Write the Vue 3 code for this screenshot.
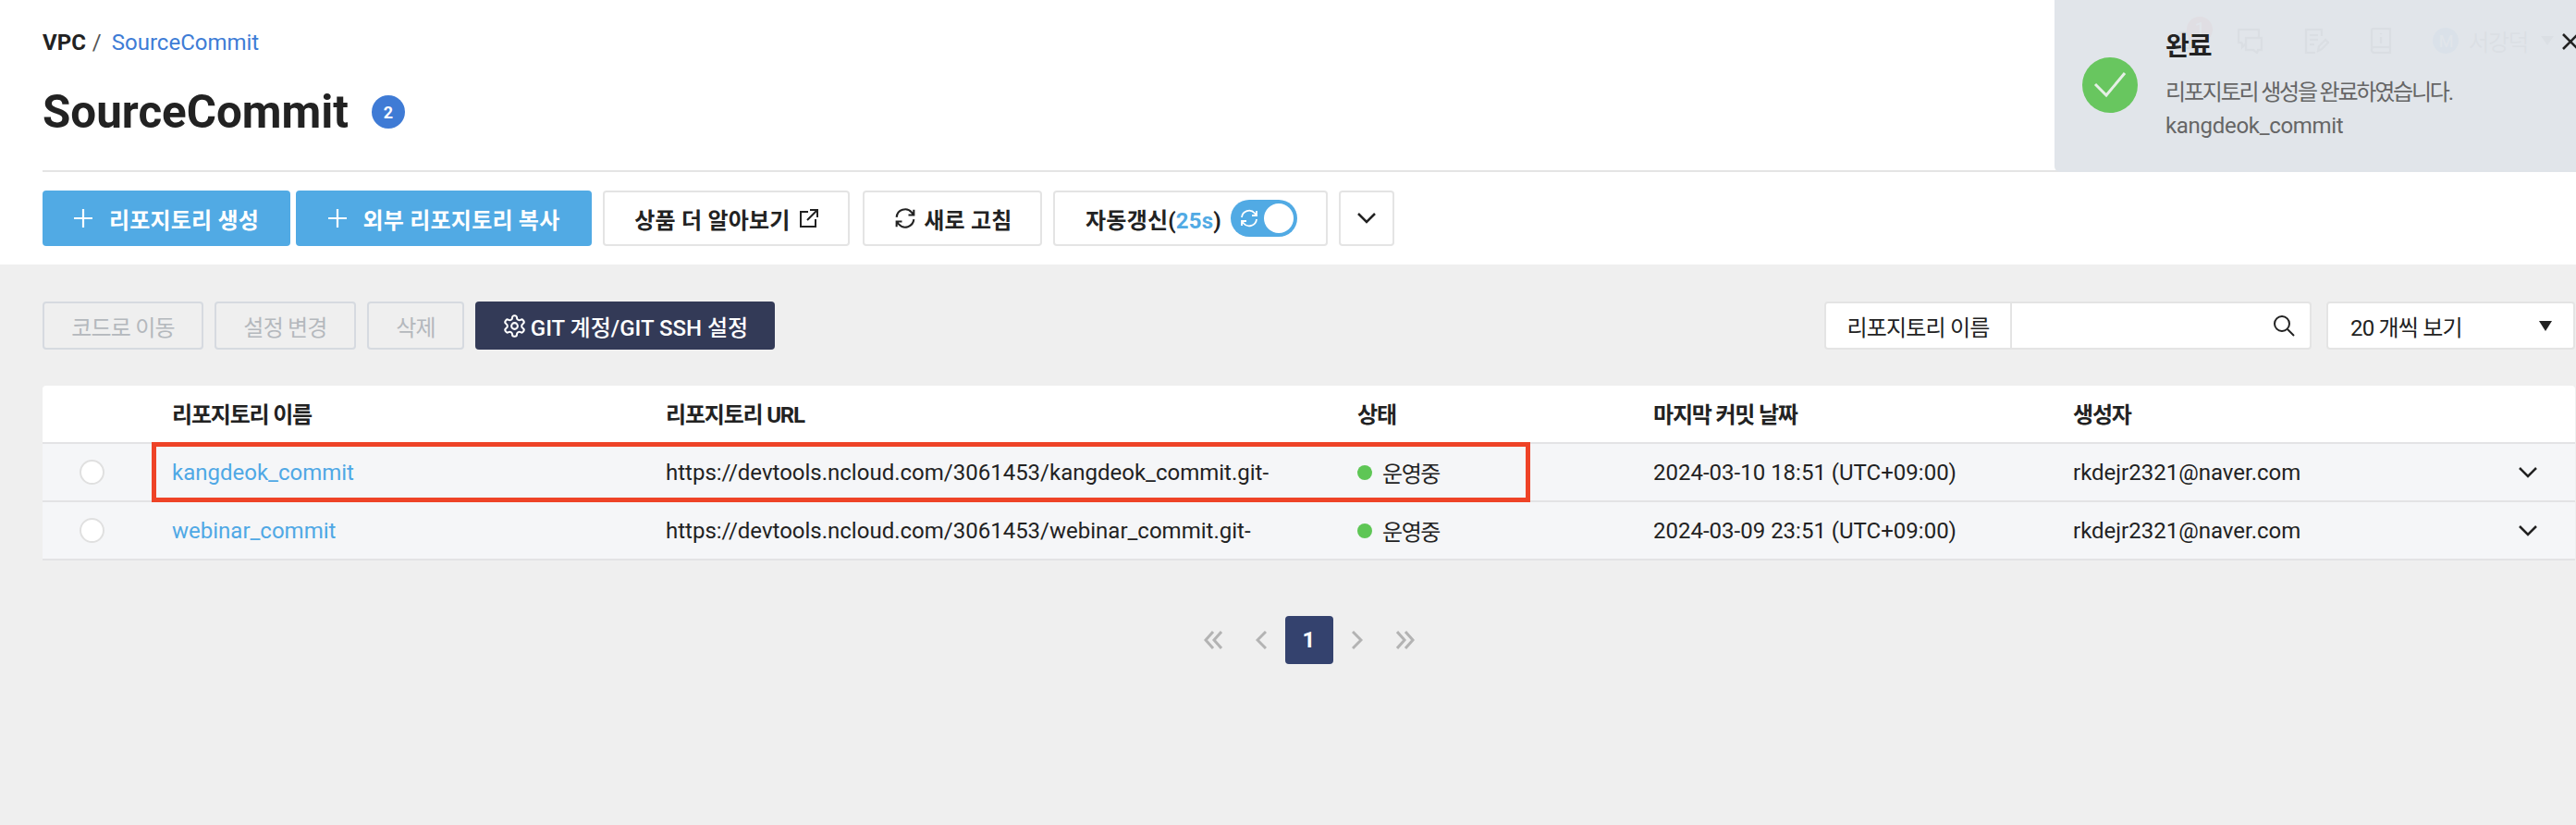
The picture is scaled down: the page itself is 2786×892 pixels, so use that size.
<script setup>
const columns = ['리포지토리 이름', '리포지토리 URL', '상태', '마지막 커밋 날짜', '생성자']
const rows = [
  { name: 'kangdeok_commit', url: 'https://devtools.ncloud.com/3061453/kangdeok_commit.git-', date: '2024-03-10 18:51 (UTC+09:00)' },
  { name: 'webinar_commit', url: 'https://devtools.ncloud.com/3061453/webinar_commit.git-', date: '2024-03-09 23:51 (UTC+09:00)' },
]
</script>

<template>
  <div class="page">
    <header class="head">
      <div class="top">
        <nav class="crumbs">
          <b>VPC</b><span class="slash">/</span><a class="crumb-link">SourceCommit</a>
        </nav>
        <div class="menu">
          <span class="bell">
            <svg width="28" height="28" viewBox="0 0 24 24" fill="none" stroke="currentColor" stroke-width="2"><path d="M6 17V10a6 6 0 0 1 12 0v7l2 2H4zM10 22h4" /></svg>
            <i class="bell-count">1</i>
          </span>
          <svg width="29" height="28" viewBox="0 0 29 28" fill="none" stroke="currentColor" stroke-width="2.4"><path d="M6 16H2V2h22v8M10 11h17v13h-4l-1 3-4-3h-8zM6 16v5l4-4" /></svg>
          <svg width="27" height="28" viewBox="0 0 27 28" fill="none" stroke="currentColor" stroke-width="2.4"><path d="M19 9V2H2v25h10M6 8h9M6 13h9M6 18h5M15 25l1-5 7-7 3 3-7 7z" /></svg>
          <svg width="24" height="28" viewBox="0 0 24 28" fill="none" stroke="currentColor" stroke-width="2.4"><path d="M2 23V3a2 2 0 0 1 2-2h18v26H5a3 3 0 0 1-3-4 3 3 0 0 1 3-2h17M12 6v1M12 10v7" /></svg>
          <span class="user">
            <i class="avatar">M</i>
            <span class="user-name">서강덕</span>
            <i class="user-caret"></i>
          </span>
        </div>
      </div>

      <div class="title-row">
        <h1>SourceCommit</h1>
        <span class="count">2</span>
      </div>

      <div class="actions">
        <button class="btn primary first">
          <svg width="20" height="20" viewBox="0 0 20 20" stroke="currentColor" stroke-width="2.2"><path d="M10 0v20M0 10h20" /></svg>
          <span>리포지토리 생성</span>
        </button>
        <button class="btn primary second">
          <svg width="20" height="20" viewBox="0 0 20 20" stroke="currentColor" stroke-width="2.2"><path d="M10 0v20M0 10h20" /></svg>
          <span>외부 리포지토리 복사</span>
        </button>
        <button class="btn outline learn">
          <span>상품 더 알아보기</span>
          <svg width="21" height="21" viewBox="0 0 21 21" fill="none" stroke="currentColor" stroke-width="2"><path d="M10 3H2v16h16v-8M12 1h8v8M20 1 9 12" /></svg>
        </button>
        <button class="btn outline refresh">
          <svg width="28" height="28" viewBox="0 0 24 24" fill="none" stroke="currentColor" stroke-width="1.800"><path d="M4 11a8 8 0 0 1 14-4.500L20 9M20 4v5h-5M20 13a8 8 0 0 1-14 4.500L4 15M4 20v-5h5" /></svg>
          <span>새로 고침</span>
        </button>
        <div class="btn outline auto">
          <span>자동갱신(<em>25s</em>)</span>
          <span class="toggle">
            <svg width="24" height="24" viewBox="0 0 24 24" fill="none" stroke="#fff" stroke-width="1.800"><path d="M4 11a8 8 0 0 1 14-4.500L20 9M20 4v5h-5M20 13a8 8 0 0 1-14 4.500L4 15M4 20v-5h5" /></svg>
            <i class="knob"></i>
          </span>
        </div>
        <button class="btn outline more">
          <svg width="22" height="14" viewBox="0 0 22 14" fill="none" stroke="#222" stroke-width="2.500"><path d="m2 2 9 9 9-9" /></svg>
        </button>
      </div>
    </header>

    <main class="content">
      <div class="toolbar">
        <div class="tools">
          <button class="tool off w1">코드로 이동</button>
          <button class="tool off w2">설정 변경</button>
          <button class="tool off w3">삭제</button>
          <button class="tool dark">
            <svg width="27" height="27" viewBox="0 0 24 24" fill="none" stroke="#fff" stroke-width="1.800"><path d="M12.220 2h-.440a2 2 0 0 0-2 2v.180a2 2 0 0 1-1 1.730l-.430.250a2 2 0 0 1-2 0l-.150-.080a2 2 0 0 0-2.730.730l-.220.380a2 2 0 0 0 .730 2.730l.150.100a2 2 0 0 1 1 1.720v.510a2 2 0 0 1-1 1.740l-.150.090a2 2 0 0 0-.730 2.730l.220.380a2 2 0 0 0 2.730.730l.150-.080a2 2 0 0 1 2 0l.430.250a2 2 0 0 1 1 1.730V20a2 2 0 0 0 2 2h.440a2 2 0 0 0 2-2v-.180a2 2 0 0 1 1-1.730l.430-.250a2 2 0 0 1 2 0l.150.080a2 2 0 0 0 2.730-.730l.220-.390a2 2 0 0 0-.730-2.730l-.150-.080a2 2 0 0 1-1-1.740v-.500a2 2 0 0 1 1-1.740l.150-.090a2 2 0 0 0 .730-2.730l-.220-.380a2 2 0 0 0-2.730-.730l-.150.080a2 2 0 0 1-2 0l-.430-.250a2 2 0 0 1-1-1.730V4a2 2 0 0 0-2-2z" /><circle cx="12" cy="12" r="3" /></svg>
            <span>GIT 계정/GIT SSH 설정</span>
          </button>
        </div>
        <div class="filters">
          <div class="search">
            <span class="search-label">리포지토리 이름</span>
            <span class="search-field">
              <svg width="24" height="24" viewBox="0 0 24 24" fill="none" stroke="#222" stroke-width="2"><circle cx="10" cy="10" r="8" /><path d="m16 16 7 7" /></svg>
            </span>
          </div>
          <div class="select">
            <span class="select-text">20 개씩 보기</span>
            <i class="select-caret"></i>
          </div>
        </div>
      </div>

      <section class="table">
        <div class="row header">
          <span></span>
          <span v-for="c in columns" :key="c">{{ c }}</span>
          <span></span>
        </div>
        <div v-for="r in rows" :key="r.name" class="row body">
          <span class="radio-cell"><i class="radio"></i></span>
          <a class="repo">{{ r.name }}</a>
          <span>{{ r.url }}</span>
          <span class="status"><i class="dot"></i><span class="status-text">운영중</span></span>
          <span>{{ r.date }}</span>
          <span>rkdejr2321@naver.com</span>
          <span class="expand">
            <svg width="22" height="14" viewBox="0 0 22 14" fill="none" stroke="#222" stroke-width="2.500"><path d="m2 2 9 9 9-9" /></svg>
          </span>
        </div>
        <div class="highlight"></div>
      </section>

      <nav class="pager">
        <svg class="edge-left" width="20" height="20" viewBox="0 0 20 20" fill="none" stroke="#b3b3b3" stroke-width="3"><path d="M10 1 2 10l8 9M19 1l-8 9 8 9" /></svg>
        <svg width="12" height="20" viewBox="0 0 12 20" fill="none" stroke="#b3b3b3" stroke-width="3"><path d="M11 1 2 10l9 9" /></svg>
        <span class="current">1</span>
        <svg width="12" height="20" viewBox="0 0 12 20" fill="none" stroke="#b3b3b3" stroke-width="3"><path d="m1 1 9 9-9 9" /></svg>
        <svg class="edge-right" width="20" height="20" viewBox="0 0 20 20" fill="none" stroke="#b3b3b3" stroke-width="3"><path d="m1 1 8 9-8 9M10 1l8 9-8 9" /></svg>
      </nav>
    </main>

    <aside class="toast">
      <span class="ok">
        <svg width="36" height="30" viewBox="0 0 36 30" fill="none" stroke="#e6efe6" stroke-width="3"><path d="m2 14 12 12L34 2" /></svg>
      </span>
      <div class="toast-text">
        <strong>완료</strong>
        <p class="toast-msg">리포지토리 생성을 완료하였습니다.</p>
        <p class="toast-name">kangdeok_commit</p>
      </div>
      <svg class="close" width="18" height="18" viewBox="0 0 18 18" fill="none" stroke="#222" stroke-width="2.600"><path d="m1 1 16 16M17 1 1 17" /></svg>
    </aside>
  </div>
</template>

<style>
html, body { margin: 0; overflow: hidden; }
</style>

<style scoped>
.page {
  position: relative;
  width: 2786px;
  height: 892px;
  overflow: hidden;
  background: #efefef;
  color: #222;
  font-family: Roboto, "Noto Sans CJK KR", sans-serif;
  font-size: 24px;
}
button { font: inherit; padding: 0; margin: 0; }
i, em { font-style: normal; }

.head { background: #fff; height: 286px; box-sizing: border-box; padding-left: 46px; }
.top { display: flex; align-items: center; justify-content: space-between; height: 78px; padding-top: 14px; box-sizing: border-box; }
.crumbs { display: flex; align-items: center; line-height: 32px; }
.crumbs b { font-weight: 700; }
.slash { margin: 0 11px 0 7px; color: #555; }
.crumb-link { color: #3e7cd6; }

.menu { display: flex; align-items: center; gap: 44px; padding-right: 24px; color: #555; height: 56px; margin-top: -4px; }
.bell { position: relative; display: flex; width: 28px; }
.bell-count {
  position: absolute; left: 18px; top: -12px; width: 28px; height: 28px; border-radius: 50%;
  background: #d4524a; color: #fff; display: flex; align-items: center; justify-content: center; font-size: 20px;
}
.user { display: flex; align-items: center; gap: 10px; font-size: 25px; color: #666; }
.user-name { letter-spacing: -1.5px; }
.avatar {
  width: 28px; height: 28px; border-radius: 50%; background: #4b9de0; color: #fff;
  display: flex; align-items: center; justify-content: center; font-size: 18px;
}
.user-caret { width: 0; height: 0; border: 7px solid transparent; border-top: 10px solid #666; border-bottom: 0; margin-left: 4px; }

.title-row {
  display: flex; align-items: center; gap: 25px; height: 106px; box-sizing: content-box;
  border-bottom: 2px solid #e4e4e4; padding-bottom: 0;
}
h1 { margin: -20px 0 0; font-size: 49.3px; font-weight: 700; line-height: 56px; }
.count {
  width: 36px; height: 36px; margin-top: -20px; border-radius: 50%; background: #3f7bd5; color: #fff;
  display: flex; align-items: center; justify-content: center; font-size: 18px; font-weight: 700;
}

.actions { display: flex; margin-top: 20px; }
.btn {
  height: 60px; box-sizing: border-box; border-radius: 4px; display: flex; align-items: center; justify-content: center;
  font-size: 24px; font-weight: 700; letter-spacing: 0.2px;
}
.primary { background: #51aae4; color: #fff; border: 0; gap: 18px; }
.first { width: 268px; }
.second { width: 320px; margin-left: 6px; }
.outline { background: #fff; border: 2px solid #e4e4e4; color: #222; }
.learn { width: 267px; margin-left: 12px; gap: 9px; }
.refresh { width: 194px; margin-left: 14px; gap: 6px; }
.auto { width: 297px; margin-left: 12px; gap: 10px; padding-left: 2px; }
.auto em { color: #51aae4; font-weight: 700; }
.toggle {
  width: 72px; height: 40px; border-radius: 20px; background: #51aae4; display: flex; align-items: center;
  justify-content: space-between; padding: 0 4px 0 8px; box-sizing: border-box;
}
.knob { width: 32px; height: 32px; border-radius: 50%; background: #fff; }
.more { width: 60px; margin-left: 12px; }

.content { padding: 40px 1px 0 46px; }
.toolbar { display: flex; justify-content: space-between; height: 52px; }
.tools { display: flex; gap: 12px; }
.tool { height: 52px; box-sizing: border-box; border-radius: 4px; font-size: 24px; }
.off { background: transparent; border: 2px solid #d6dae0; color: #b4b8bd; letter-spacing: -0.8px; }
.w1 { width: 174px; } .w2 { width: 153px; } .w3 { width: 105px; }
.dark { width: 324px; background: #333a57; color: #fff; border: 0; display: flex; align-items: center; justify-content: center; gap: 4px; font-weight: 500; }
.filters { display: flex; gap: 16px; }
.search { display: flex; width: 527px; height: 52px; box-sizing: border-box; background: #fff; border: 2px solid #e4e4e4; border-radius: 4px; }
.search-label { width: 201px; flex: none; box-sizing: border-box; border-right: 2px solid #e4e4e4; display: flex; align-items: center; justify-content: center; letter-spacing: -0.8px; }
.search-field { flex: 1; display: flex; align-items: center; justify-content: flex-end; padding-right: 16px; }
.select {
  width: 269px; height: 52px; box-sizing: border-box; background: #fff; border: 2px solid #e4e4e4; border-radius: 4px;
  display: flex; align-items: center; justify-content: space-between; padding: 0 23px 0 24px;
}
.select-text { letter-spacing: -0.8px; }
.select-caret { width: 0; height: 0; border: 7.5px solid transparent; border-top: 11px solid #222; border-bottom: 0; }

.table { position: relative; margin-top: 39px; }
.row {
  display: grid;
  grid-template-columns: 140px 534px 748px 320px 454px 1fr 70px;
  align-items: center;
  box-sizing: border-box;
  border-bottom: 2px solid #e3e3e5;
  height: 63px;
}
.header { background: #fff; font-weight: 700; border-radius: 4px 4px 0 0; letter-spacing: -1.2px; padding-bottom: 2px; }
.body { background: #f5f6f8; }
.radio-cell { display: flex; padding-left: 40px; }
.radio { width: 27px; height: 27px; box-sizing: border-box; border-radius: 50%; background: #fff; border: 2px solid #e0e0e0; }
.repo { color: #4fa8e5; }
.status { display: flex; align-items: center; gap: 11px; }
.status-text { letter-spacing: -1.4px; }
.dot { width: 16px; height: 16px; border-radius: 50%; background: #5ec655; }
.expand { display: flex; padding-left: 8px; }
.highlight { position: absolute; left: 118px; top: 61px; width: 1491px; height: 65px; box-sizing: border-box; border: 5px solid #ee4327; pointer-events: none; }

.pager { display: flex; justify-content: center; align-items: center; gap: 20px; margin-top: 60px; }
.edge-left { margin-right: 16px; }
.edge-right { margin-left: 16px; }
.current {
  width: 52px; height: 52px; border-radius: 4px; background: #34426e; color: #fff;
  display: flex; align-items: center; justify-content: center; font-size: 24px; font-weight: 700;
}

.toast {
  position: absolute; right: 0; top: 0; width: 564px; height: 186px; box-sizing: border-box;
  background: rgba(224, 228, 233, 0.96); border-radius: 0 0 0 6px;
}
.ok {
  position: absolute; left: 30px; top: 62px; width: 60px; height: 60px; border-radius: 50%; background: #68c65f;
  display: flex; align-items: center; justify-content: center;
}
.toast-text { position: absolute; left: 120px; top: 31px; }
.toast-text strong { display: block; font-size: 28px; line-height: 34px; font-weight: 700; letter-spacing: -1px; margin-top: 3px; }
.toast-text p { margin: 0; color: #666; font-size: 24px; line-height: 36px; }
.toast-msg { margin-top: 14px !important; letter-spacing: -2.2px; }
.toast-name { letter-spacing: -0.3px; }
.close { position: absolute; left: 549px; top: 36px; }
</style>
